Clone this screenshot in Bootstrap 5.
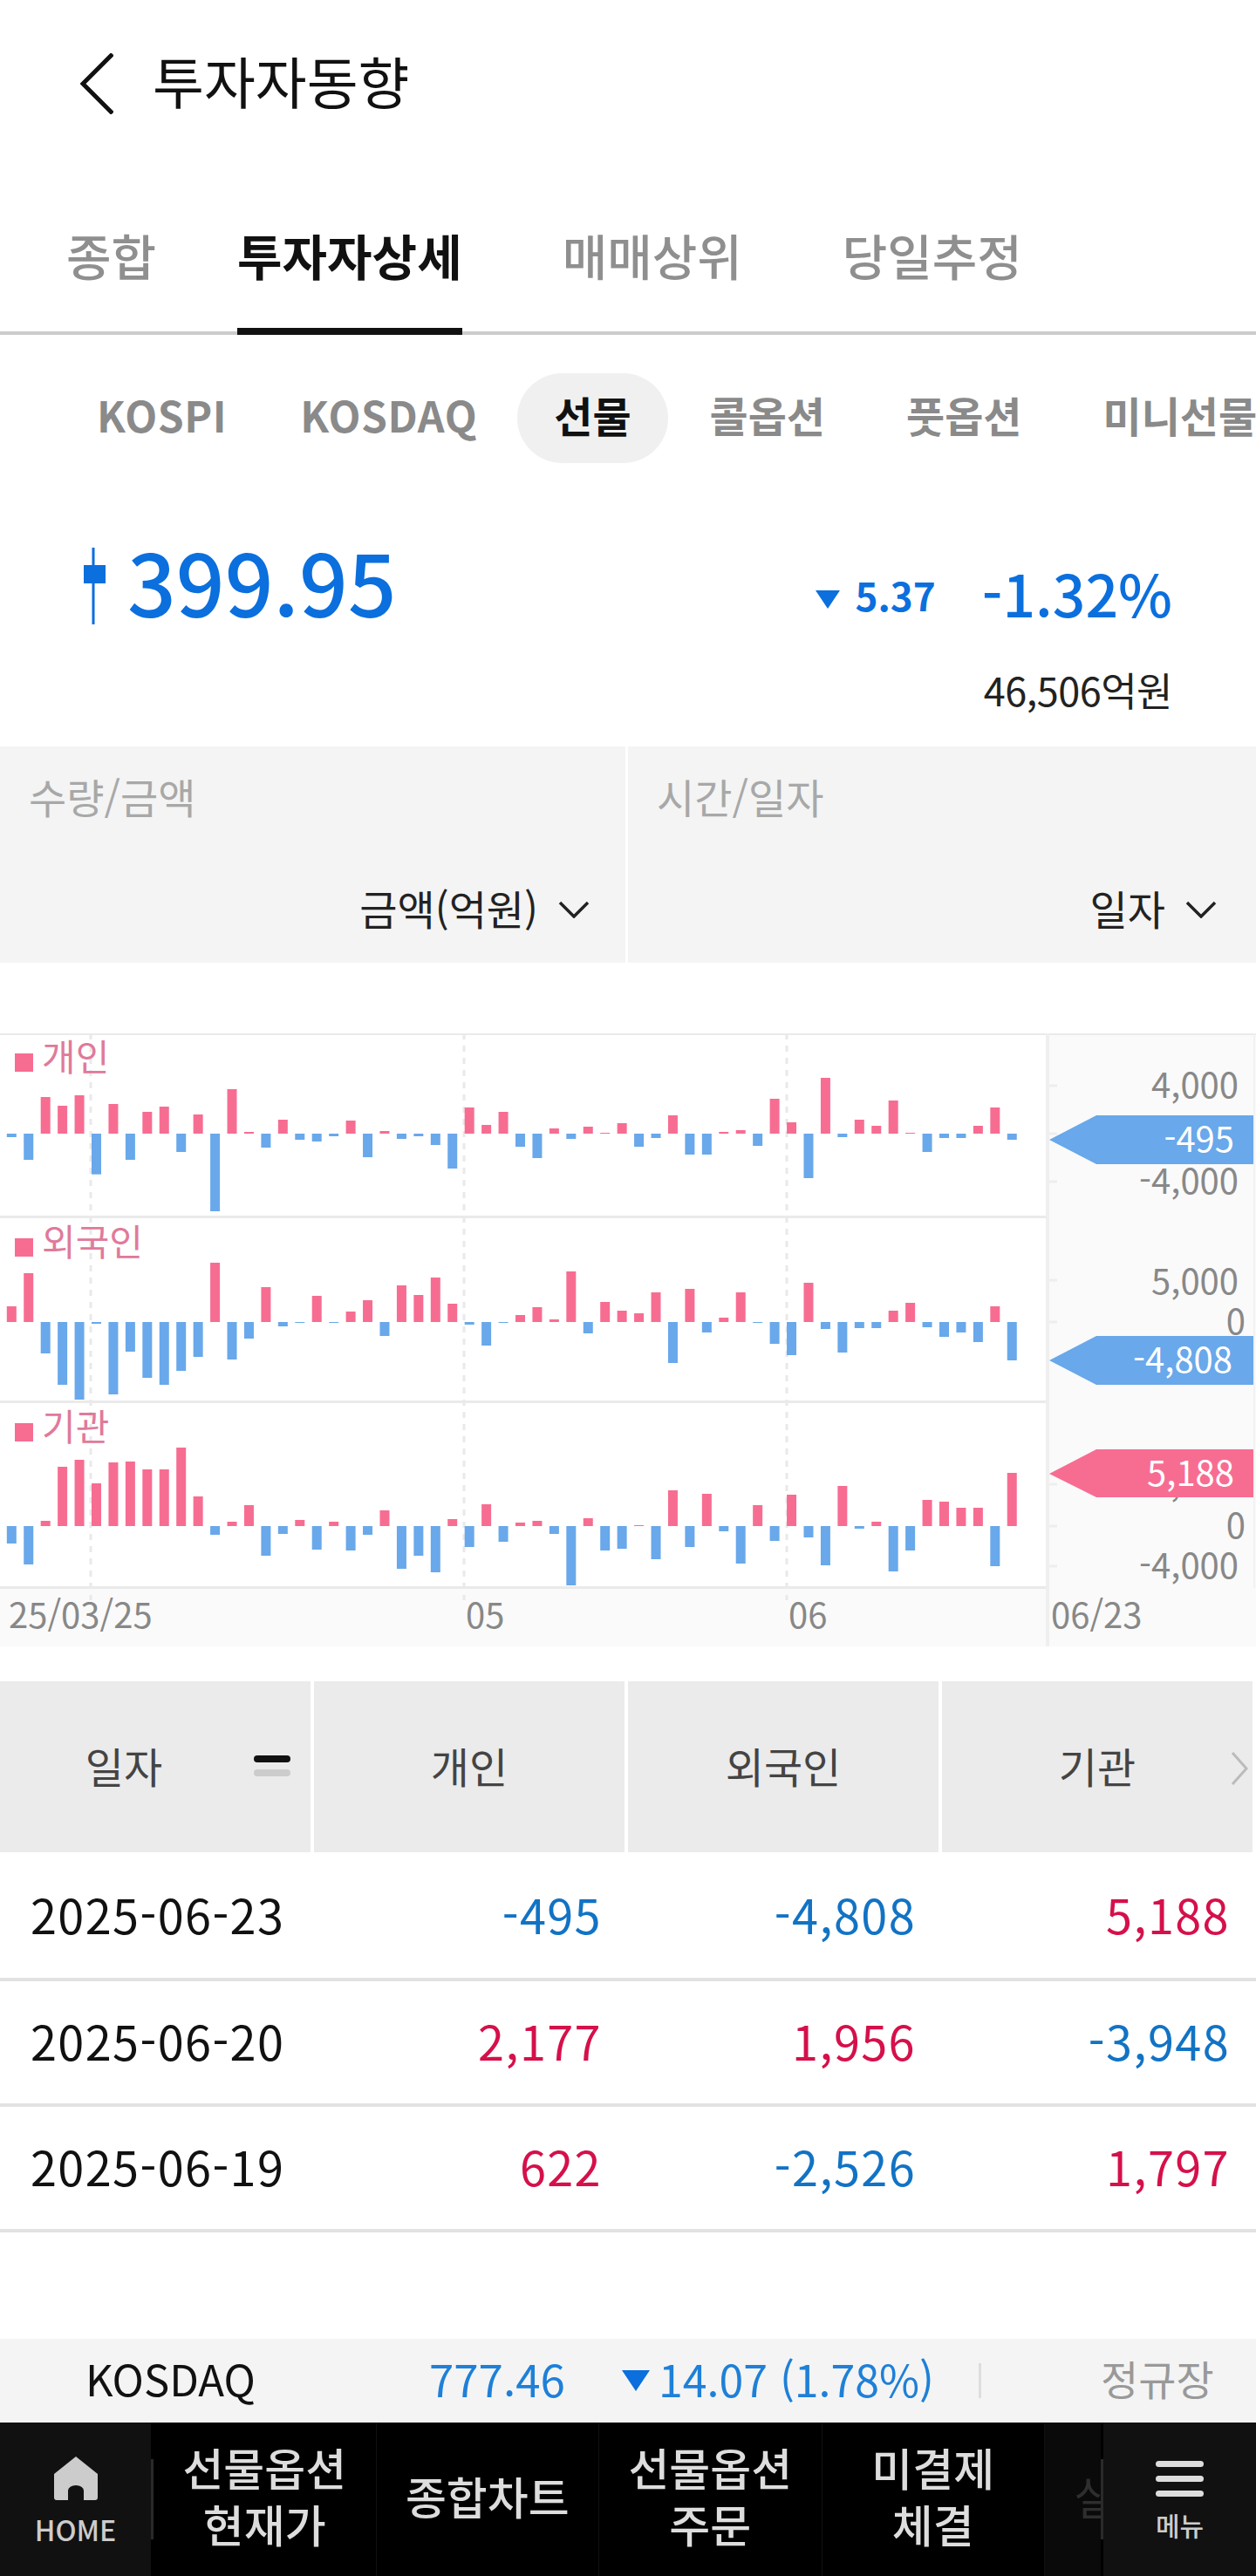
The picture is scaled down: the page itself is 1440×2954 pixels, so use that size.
<!DOCTYPE html>
<html lang="ko">
<head>
    <meta charset="UTF-8">
    <meta name="viewport" content="width=device-width, initial-scale=1.0">
    <title>투자자동향</title>
    <link href="https://cdn.jsdelivr.net/npm/bootstrap@5.3.0/dist/css/bootstrap.min.css" rel="stylesheet">
    <style>
        body {
            background: #fff;
            color: #111;
            font-family: "Noto Sans CJK KR", sans-serif;
            width: 1440px;
            height: 2954px;
            overflow: hidden;
        }

        .page-head {
            height: 192px;
            padding-left: 92px;
            gap: 45px;
        }

        .page-title {
            font-size: 64px;
            line-height: 1;
            font-weight: 400;
            margin: 0 0 10px;
        }

        .main-tabs {
            height: 192px;
            border-bottom: 4px solid #ccc;
            padding-left: 76px;
        }

        .main-tab {
            font-size: 56px;
            color: #8f8f8f;
            font-weight: 500;
            height: 192px;
            line-height: 1;
            padding-top: 72px;
            text-decoration: none;
        }

        .main-tab.on {
            color: #111;
            font-weight: 700;
            border-bottom: 8px solid #111;
            margin-left: 93px;
        }

        .main-tab.far { margin-left: 115px; }

        .sub-tabs {
            height: 192px;
            padding-left: 66px;
            padding-top: 44px;
            gap: 3px;
            overflow: hidden;
            white-space: nowrap;
        }

        .sub-tab {
            font-size: 48px;
            font-weight: 700;
            color: #8a8a8a;
            height: 103px;
            line-height: 94px;
            padding: 0 45px;
            border-radius: 52px;
            flex-shrink: 0;
        }

        .sub-tab.latin { letter-spacing: .6px; padding-right: 36px; }
        .sub-tab.latin + .latin { padding-right: 43px; }

        .sub-tab.on {
            background: #f0f0f0;
            color: #111;
            padding: 0 42px;
        }

        .price-row {
            height: 280px;
            padding: 52px 96px 0 96px;
        }

        .price-main {
            font-size: 98px;
            height: 88px;
            line-height: 74px;
            font-weight: 500;
            color: #0b6fdd;
            gap: 25px;
        }

        .price-side {
            color: #0b6fdd;
            line-height: 70px;
            margin-top: 16px;
        }

        .price-down { font-size: 44px; font-weight: 700; gap: 18px; }
        .price-down svg { margin-top: 10px; }
        .price-pct { font-size: 66px; font-weight: 500; margin: 0 0 6px 53px; }
        .price-amt { font-size: 45px; letter-spacing: -.5px; color: #222; margin-top: 38px; line-height: 66px; }

        .pick-wrap { height: 248px; gap: 3px; }

        .pick-box {
            background: #f4f4f4;
            padding: 27px 45px 33px 33px;
            width: 720px;
        }

        .pick-box.narrow { width: 717px; padding-right: 41px; }

        .pick-label { font-size: 47px; line-height: 60px; color: #a8a8a8; }
        .pick-value { font-size: 47px; line-height: 60px; color: #222; gap: 23px; }
        .pick-value svg { margin-top: 3px; }

        .chart-wrap { margin-top: 81px; height: 703px; }
        .chart-wrap svg { display: block; }
        .ax { font-size: 40px; fill: #888; }
        .leg { font-size: 42px; fill: #e07a9a; }
        .tag { font-size: 40px; fill: #fff; }

        .grid-head {
            margin-top: 40px;
            height: 196px;
            gap: 4px;
        }

        .grid-head > div {
            width: 356px;
            background: #ebebeb;
            font-size: 48px;
            color: #444;
            padding-bottom: 4px;
        }

        .sort-mark { gap: 8px; right: 23px; top: 85px; }
        .sort-mark span { display: block; width: 42px; height: 8px; border-radius: 4px; background: #111; }
        .sort-mark span + span { background: #ccc; }
        .next-mark { right: 4px; top: 80px; }

        .grid-row {
            height: 144px;
            border-bottom: 4px solid #e2e2e2;
            font-size: 54px;
            letter-spacing: 1.4px;
            padding-left: 35px;
            padding-bottom: 5px;
        }

        .grid-row.first { height: 148px; padding-bottom: 3px; }
        .cell-date { width: 290px; color: #111; white-space: nowrap; }
        .cell-num { width: 360px; text-align: right; }
        .cell-num.wide { width: 365px; }
        .up { color: #d5104a; }
        .down { color: #1273c4; }

        .index-bar {
            margin-top: 122px;
            height: 96px;
            background: #f4f4f4;
            font-size: 50px;
            padding-bottom: 6px;
        }

        .index-name { margin-left: 98px; width: 394px; color: #111; font-size: 49px; }
        .index-val { width: 221px; color: #1e80d8; font-size: 51px; }
        .index-chg { width: 409px; color: #1e80d8; gap: 10px; }
        .index-chg svg { margin-top: 6px; }
        .index-sep { width: 3px; height: 40px; background: #ddd; margin-top: 6px; }
        .index-state { margin-left: 137px; color: #999; font-size: 47px; }

        .bottom-nav {
            height: 176px;
            background: #000;
            color: #ddd;
        }

        .nav-home, .nav-more { background: #111; flex-shrink: 0; }
        .nav-home { width: 173px; }
        .nav-sep { width: 3px; height: 92px; background: #2a2a2a; align-self: center; flex-shrink: 0; }
        .nav-item {
            width: 255.5px;
            flex-shrink: 0;
            font-size: 51px;
            font-weight: 500;
            line-height: 65px;
            text-align: center;
            padding-bottom: 8px;
            border-right: 1px solid #111;
        }
        .nav-fade {
            width: 64px;
            padding: 0 0 8px 33px;
            overflow: hidden;
            white-space: nowrap;
            font-size: 51px;
            color: #2e2e2e;
            background: #0a0a0a;
            flex-shrink: 0;
        }
        .nav-more { flex: 1; }
        .nav-cap { font-size: 32px; color: #ccc; line-height: 1; font-weight: 500; }
        .nav-cap.kr { font-size: 30px; }
        .menu-lines { gap: 10px; margin-bottom: 17px; }
        .menu-lines span { display: block; width: 55px; height: 7px; border-radius: 4px; background: #ddd; }
    </style>
</head>
<body>

    <header class="page-head d-flex align-items-center">
        <svg width="38" height="70" viewBox="0 0 38 70" fill="none" stroke="#111" stroke-width="5"><path d="M37 1 3 35l34 34"/></svg>
        <h1 class="page-title">투자자동향</h1>
    </header>

    <nav class="main-tabs d-flex">
        <a class="main-tab" href="#">종합</a>
        <a class="main-tab on" href="#">투자자상세</a>
        <a class="main-tab far" href="#">매매상위</a>
        <a class="main-tab far" href="#">당일추정</a>
    </nav>

    <div class="sub-tabs d-flex">
        <div class="sub-tab latin">KOSPI</div>
        <div class="sub-tab latin">KOSDAQ</div>
        <div class="sub-tab on">선물</div>
        <div class="sub-tab">콜옵션</div>
        <div class="sub-tab">풋옵션</div>
        <div class="sub-tab">미니선물</div>
    </div>

    <section class="price-row d-flex justify-content-between">
        <div class="price-main d-flex">
            <svg width="25" height="88" viewBox="0 0 25 88" fill="#0b6fdd"><rect x="9.5" width="3" height="88"/><rect y="20" width="25" height="21"/></svg>
            <span>399.95</span>
        </div>
        <div class="price-side text-end">
            <div class="d-flex align-items-center justify-content-end">
                <div class="price-down d-flex align-items-center">
                    <svg width="28" height="21" viewBox="0 0 28 21" fill="#0b6fdd"><path d="M0 0h28L14 21z"/></svg>
                    <span>5.37</span>
                </div>
                <div class="price-pct">-1.32%</div>
            </div>
            <div class="price-amt">46,506억원</div>
        </div>
    </section>

    <section class="pick-wrap d-flex">
        <div class="pick-box narrow d-flex flex-column justify-content-between">
            <div class="pick-label">수량/금액</div>
            <div class="pick-value d-flex align-items-center justify-content-end">
                <span>금액(억원)</span>
                <svg width="36" height="20" viewBox="0 0 36 20" fill="none" stroke="#222" stroke-width="3.5"><path d="m2 2 16 16L34 2"/></svg>
            </div>
        </div>
        <div class="pick-box d-flex flex-column justify-content-between">
            <div class="pick-label">시간/일자</div>
            <div class="pick-value d-flex align-items-center justify-content-end">
                <span>일자</span>
                <svg width="36" height="20" viewBox="0 0 36 20" fill="none" stroke="#222" stroke-width="3.5"><path d="m2 2 16 16L34 2"/></svg>
            </div>
        </div>
    </section>

    <section class="chart-wrap">
        <svg id="chart" width="1440" height="703" viewBox="0 1185 1440 703">
            <rect x="1201" y="1185" width="239" height="703" fill="#fafafa"/>
            <rect x="0" y="1821" width="1440" height="67" fill="#fafafa"/>
            <g id="gridLines" stroke="#e9e9e9" stroke-width="3" stroke-dasharray="7 7">
                <path d="M104 1185V1835M532 1185V1835M902 1185V1835"/>
            </g>
            <g fill="#eaeaea">
                <rect y="1184" width="1440" height="3"/>
                <rect y="1394" width="1201" height="3"/>
                <rect y="1606" width="1201" height="3"/>
                <rect y="1819" width="1201" height="3"/>
                <rect x="1199" y="1184" width="4" height="704" fill="#efefef"/>
                <rect x="1437" y="1184" width="2" height="637" fill="#f2f2f2"/>
            </g>
            <g id="bars"></g>
            <g fill="#f76d92">
                <rect x="17" y="1208" width="21" height="21"/>
                <rect x="17" y="1420" width="21" height="21"/>
                <rect x="17" y="1632" width="21" height="21"/>
            </g>
            <text class="leg" x="48" y="1228">개인</text>
            <text class="leg" x="48" y="1440">외국인</text>
            <text class="leg" x="48" y="1652">기관</text>
            <path stroke="#eee" stroke-width="3" d="M1203 1245h9M1203 1300h9M1203 1355h9M1203 1468h9M1203 1516h9M1203 1702h9M1203 1750h9M1203 1796h9"/>
            <g class="ax" text-anchor="end">
                <text class="ax" x="1420" y="1259">4,000</text>
                <text class="ax" x="1420" y="1369">-4,000</text>
                <text class="ax" x="1420" y="1484">5,000</text>
                <text class="ax" x="1428" y="1530">0</text>
                <text class="ax" x="1420" y="1716">4,000</text>
                <text class="ax" x="1428" y="1764">0</text>
                <text class="ax" x="1420" y="1810">-4,000</text>
            </g>
            <polygon fill="#69a8ea" points="1203,1307 1257,1279 1437,1279 1437,1335 1257,1335"/>
            <polygon fill="#69a8ea" points="1203,1560 1257,1532 1437,1532 1437,1588 1257,1588"/>
            <polygon fill="#f76d92" points="1203,1690 1257,1662 1437,1662 1437,1717 1257,1717"/>
            <text class="tag" text-anchor="end" x="1415" y="1321">-495</text>
            <text class="tag" text-anchor="end" x="1413" y="1574">-4,808</text>
            <text class="tag" text-anchor="end" x="1415" y="1704">5,188</text>
            <text class="ax" x="10" y="1867">25/03/25</text>
            <text class="ax" x="534" y="1867">05</text>
            <text class="ax" x="904" y="1867">06</text>
            <text class="ax" x="1205" y="1867">06/23</text>
        </svg>
    </section>

    <section>
        <div class="grid-head d-flex">
            <div class="d-flex align-items-center justify-content-center position-relative pe-5">
                <span class="pe-4">일자</span>
                <div class="sort-mark d-flex flex-column position-absolute"><span></span><span></span></div>
            </div>
            <div class="d-flex align-items-center justify-content-center">개인</div>
            <div class="d-flex align-items-center justify-content-center">외국인</div>
            <div class="d-flex align-items-center justify-content-center position-relative">
                기관
                <svg class="next-mark position-absolute" width="22" height="40" viewBox="0 0 22 40" fill="none" stroke="#bbb" stroke-width="3"><path d="m3 2 16 18L3 38"/></svg>
            </div>
        </div>
        <div class="grid-row first d-flex align-items-center">
            <div class="cell-date">2025-06-23</div>
            <div class="cell-num wide down">-495</div>
            <div class="cell-num down">-4,808</div>
            <div class="cell-num up">5,188</div>
        </div>
        <div class="grid-row d-flex align-items-center">
            <div class="cell-date">2025-06-20</div>
            <div class="cell-num wide up">2,177</div>
            <div class="cell-num up">1,956</div>
            <div class="cell-num down">-3,948</div>
        </div>
        <div class="grid-row d-flex align-items-center">
            <div class="cell-date">2025-06-19</div>
            <div class="cell-num wide up">622</div>
            <div class="cell-num down">-2,526</div>
            <div class="cell-num up">1,797</div>
        </div>
    </section>

    <section class="index-bar d-flex align-items-center">
        <div class="index-name">KOSDAQ</div>
        <div class="index-val">777.46</div>
        <div class="index-chg d-flex align-items-center">
            <svg width="32" height="24" viewBox="0 0 32 24" fill="#0b6fdd"><path d="M0 0h32L16 24z"/></svg>
            <span>14.07 (1.78%)</span>
        </div>
        <div class="index-sep"></div>
        <div class="index-state">정규장</div>
    </section>

    <footer class="bottom-nav d-flex">
        <div class="nav-home d-flex flex-column align-items-center justify-content-center">
            <svg width="50" height="51" viewBox="0 0 50 51" fill="#ccc" class="mb-3"><path d="M25 0 50 20v27a3 3 0 0 1-3 3H34V39a9 6 0 0 0-18 0v11H3a3 3 0 0 1-3-3V20z"/></svg>
            <div class="nav-cap">HOME</div>
        </div>
        <div class="nav-sep"></div>
        <div class="nav-item d-flex align-items-center justify-content-center">선물옵션<br>현재가</div>
        <div class="nav-item d-flex align-items-center justify-content-center">종합차트</div>
        <div class="nav-item d-flex align-items-center justify-content-center">선물옵션<br>주문</div>
        <div class="nav-item d-flex align-items-center justify-content-center">미결제<br>체결</div>
        <div class="nav-fade d-flex align-items-center">실시간</div>
        <div class="nav-sep"></div>
        <div class="nav-more d-flex flex-column align-items-center justify-content-center">
            <div class="menu-lines d-flex flex-column"><span></span><span></span><span></span></div>
            <div class="nav-cap kr">메뉴</div>
        </div>
    </footer>

    <script src="https://cdn.jsdelivr.net/npm/bootstrap@5.3.0/dist/js/bootstrap.bundle.min.js"></script>
    <script>
        // bar heights read off the reference, in thirds of a pixel
        const person = [-12,-90,126,96,132,-140,102,-90,75,93,-63,66,-267,153,6,-48,48,-21,-27,-9,45,-81,9,-18,-9,-39,-120,90,30,75,-45,-84,18,-18,24,3,36,-45,-15,63,-72,-72,6,12,-42,120,39,-153,192,-12,48,27,114,3,-63,-15,-15,27,90,-21];
        const foreign = [54,168,-108,-216,-267,-6,-249,-102,-192,-216,-168,-120,204,-129,-57,120,-15,-3,90,-3,36,75,-48,126,93,153,63,-9,-81,-3,24,51,9,174,-39,69,39,30,102,-141,114,-36,15,102,-3,-75,-114,135,-24,-105,-21,-21,39,66,-18,-51,-36,-69,54,-132];
        const inst = [-60,-132,18,204,228,147,219,222,195,195,270,102,-30,15,72,-102,-27,21,-81,15,-84,-30,54,-147,-102,-159,24,-72,75,-54,12,18,-27,-204,27,-84,-78,3,-114,123,-72,111,-18,-129,72,-51,108,-39,-135,138,-9,15,-156,-84,90,84,63,63,-138,183];

        const barsEl = document.getElementById("bars");
        let html = "";
        [[person, 1300], [foreign, 1516], [inst, 1750]].forEach(function(item) {
            item[0].forEach(function(v, i) {
                const h = Math.abs(v) / 3;
                const x = 13.3 + 19.44 * i - 5.5;
                const y = v > 0 ? item[1] - h : item[1];
                html += '<rect x="' + x + '" y="' + y + '" width="11" height="' + h + '" fill="' + (v > 0 ? "#f76d92" : "#69a8ea") + '"/>';
            });
        });
        barsEl.innerHTML = html;
    </script>
</body>
</html>
